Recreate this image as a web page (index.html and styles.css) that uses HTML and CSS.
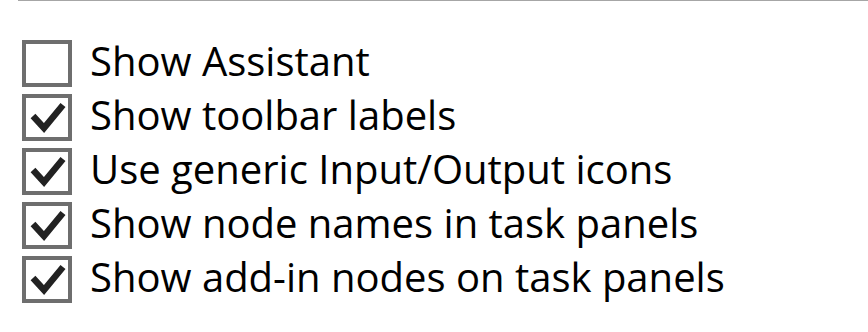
FILE: index.html
```html
<!DOCTYPE html>
<html lang="en">
<head>
    <meta charset="UTF-8">
    <title>Options</title>
    <link rel="stylesheet" href="styles.css">
</head>
<body>
    <div class="divider"></div>
    <div class="options">
        <div class="option">
            <span class="box"></span>
            <span class="label">Show Assistant</span>
        </div>
        <div class="option">
            <span class="box"><svg viewBox="0 0 42 39"><polyline points="7,18 18,30 37,7"/></svg></span>
            <span class="label">Show toolbar labels</span>
        </div>
        <div class="option">
            <span class="box"><svg viewBox="0 0 42 39"><polyline points="7,18 18,30 37,7"/></svg></span>
            <span class="label">Use generic Input/Output icons</span>
        </div>
        <div class="option">
            <span class="box"><svg viewBox="0 0 42 39"><polyline points="7,18 18,30 37,7"/></svg></span>
            <span class="label">Show node names in task panels</span>
        </div>
        <div class="option">
            <span class="box"><svg viewBox="0 0 42 39"><polyline points="7,18 18,30 37,7"/></svg></span>
            <span class="label">Show add-in nodes on task panels</span>
        </div>
    </div>
</body>
</html>
```

FILE: styles.css
```css
body {
    margin: 0;
    background: #fff;
    font-family: 'Open Sans', sans-serif;
    color: #000;
}

.divider {
    margin-left: 18px;
    border-top: 1px solid #a6a6a6;
}

.options {
    padding-top: 39px;
    padding-left: 22px;
    display: flex;
    flex-direction: column;
    gap: 7px;
}

.option {
    display: flex;
    align-items: center;
    height: 47px;
}

.box {
    width: 42px;
    height: 39px;
    border: 4px solid #6e6e6e;
    background: #fff;
    flex-shrink: 0;
}

.box svg {
    display: block;
    width: 42px;
    height: 39px;
}

.box polyline {
    fill: none;
    stroke: #222;
    stroke-width: 6.5;
    stroke-linejoin: miter;
}

.label {
    margin-left: 18px;
    font-size: 40px;
    white-space: nowrap;
    line-height: 1;
    margin-top: -6px;
}
```
